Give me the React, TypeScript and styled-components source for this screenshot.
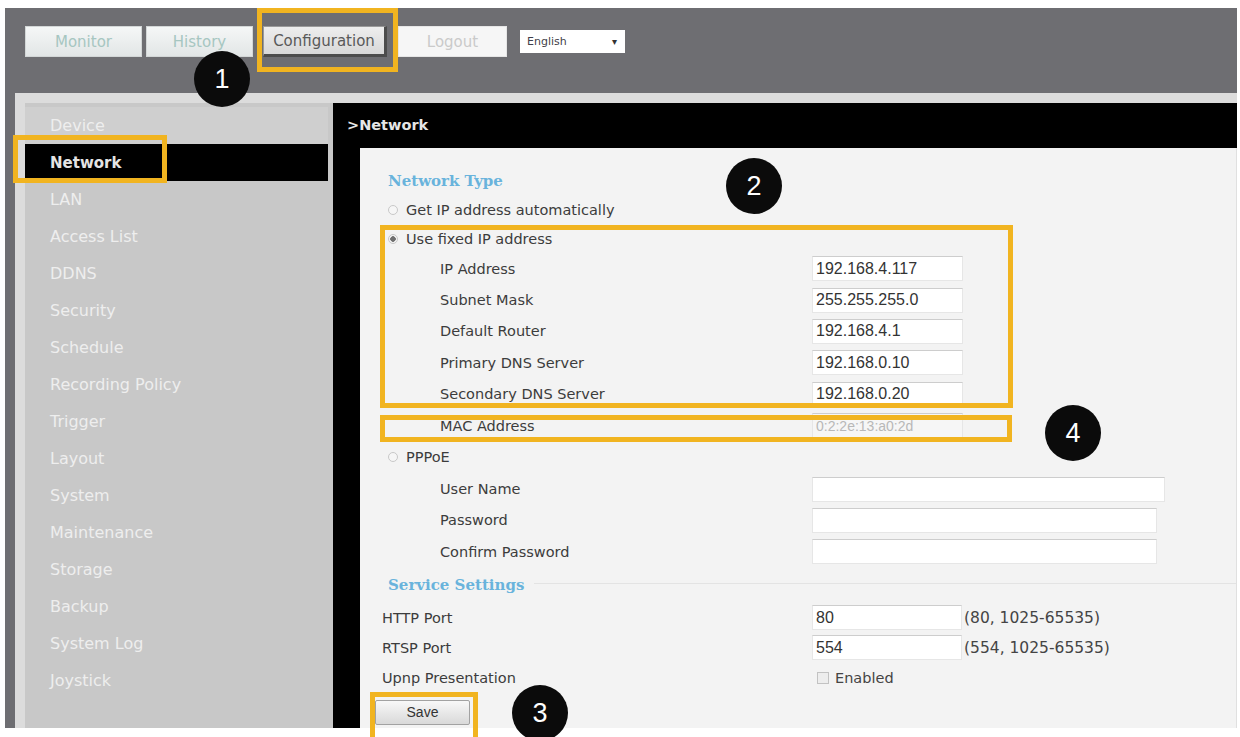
import React from "react";
import styled, { createGlobalStyle } from "styled-components";

const menuItems = [
  "Device",
  "Network",
  "LAN",
  "Access List",
  "DDNS",
  "Security",
  "Schedule",
  "Recording Policy",
  "Trigger",
  "Layout",
  "System",
  "Maintenance",
  "Storage",
  "Backup",
  "System Log",
  "Joystick",
];

const fixedIpFields = [
  { label: "IP Address", value: "192.168.4.117" },
  { label: "Subnet Mask", value: "255.255.255.0" },
  { label: "Default Router", value: "192.168.4.1" },
  { label: "Primary DNS Server", value: "192.168.0.10" },
  { label: "Secondary DNS Server", value: "192.168.0.20" },
];

const pppoeFields = [
  { label: "User Name", width: 353 },
  { label: "Password", width: 345 },
  { label: "Confirm Password", width: 345 },
];

const ports = [
  { label: "HTTP Port", value: "80", hint: "(80, 1025-65535)" },
  { label: "RTSP Port", value: "554", hint: "(554, 1025-65535)" },
];

const App = () => {
  return (
    <>
      <GlobalStyle />
      <Page>
        <Frame>
          <TopBar>
            <NavButton $w={117} $mr={4} $variant="dim">
              Monitor
            </NavButton>
            <NavButton $w={107} $mr={10} $variant="dim">
              History
            </NavButton>
            <NavButton $w={124} $mr={11} $variant="active">
              Configuration
            </NavButton>
            <NavButton $w={109} $mr={13} $variant="light">
              Logout
            </NavButton>
            <LangSelect>
              <span>English</span>
              <LangArrow>▾</LangArrow>
            </LangSelect>
          </TopBar>

          <Body>
            <Sidebar>
              {menuItems.map((item) => (
                <MenuItem
                  key={item}
                  $active={item === "Network"}
                  $top={item === "Device"}
                >
                  {item}
                </MenuItem>
              ))}
            </Sidebar>

            <Content>
              <ContentHeader>&gt;Network</ContentHeader>
              <ContentBody>
                <Panel>
                  <SectionTitle $h={28}>Network Type</SectionTitle>
                  <RadioRow>
                    <Radio />
                    Get IP address automatically
                  </RadioRow>
                  <RadioRow>
                    <Radio $checked />
                    Use fixed IP address
                  </RadioRow>
                  {fixedIpFields.map((f) => (
                    <FieldRow key={f.label} $indent={80} $h={31.4}>
                      <FieldLabel $indent={80}>{f.label}</FieldLabel>
                      <TextInput $w={151} readOnly value={f.value} />
                    </FieldRow>
                  ))}
                  <FieldRow $indent={80} $h={31.4}>
                    <FieldLabel $indent={80}>MAC Address</FieldLabel>
                    <TextInput $w={151} $muted readOnly value="0:2:2e:13:a0:2d" />
                  </FieldRow>
                  <RadioRow $h={32}>
                    <Radio />
                    PPPoE
                  </RadioRow>
                  {pppoeFields.map((f) => (
                    <FieldRow key={f.label} $indent={80} $h={31.4}>
                      <FieldLabel $indent={80}>{f.label}</FieldLabel>
                      <TextInput $w={f.width} readOnly value="" />
                    </FieldRow>
                  ))}

                  <SectionTitle $h={35} $rule>
                    Service Settings
                  </SectionTitle>
                  {ports.map((p) => (
                    <FieldRow key={p.label} $indent={22} $h={30}>
                      <FieldLabel $indent={22}>{p.label}</FieldLabel>
                      <TextInput $w={150} readOnly value={p.value} />
                      <Hint>{p.hint}</Hint>
                    </FieldRow>
                  ))}
                  <FieldRow $indent={22} $h={30}>
                    <FieldLabel $indent={22}>Upnp Presentation</FieldLabel>
                    <CheckBox />
                    <CheckText>Enabled</CheckText>
                  </FieldRow>
                  <SaveRow>
                    <SaveButton>Save</SaveButton>
                  </SaveRow>
                </Panel>
              </ContentBody>
            </Content>
          </Body>
        </Frame>

        {/* annotation overlays */}
        <HighlightBox $x={257} $y={8} $w={141} $h={64} />
        <HighlightBox $x={13} $y={135} $w={154} $h={48} />
        <HighlightBox $x={380} $y={225} $w={633} $h={183} />
        <HighlightBox $x={380} $y={415} $w={632} $h={27} />
        <HighlightBox $x={370} $y={692} $w={108} $h={60} />

        <Callout $x={222} $y={79}>1</Callout>
        <Callout $x={754} $y={186}>2</Callout>
        <Callout $x={540} $y={713}>3</Callout>
        <Callout $x={1073} $y={433}>4</Callout>
      </Page>
    </>
  );
};

export default App;

const GlobalStyle = createGlobalStyle`
  html, body {
    margin: 0;
    padding: 0;
    background: #ffffff;
  }
  body {
    font-family: "DejaVu Sans", Verdana, sans-serif;
  }
`;

const Page = styled.div`
  position: relative;
  width: 1240px;
  height: 737px;
  overflow: hidden;
  box-sizing: border-box;
  padding: 8px 0 0 5px;
  background: #ffffff;
`;

const Frame = styled.div`
  width: 1232px;
  height: 720px;
  background: #6e6e72;
  display: flex;
  flex-direction: column;
`;

const TopBar = styled.div`
  height: 85px;
  flex: 0 0 auto;
  box-sizing: border-box;
  padding: 18px 0 0 20px;
  display: flex;
  align-items: flex-start;
`;

const NavButton = styled.div<{
  $w: number;
  $mr: number;
  $variant: "dim" | "active" | "light";
}>`
  width: ${({ $w }) => $w}px;
  height: 31px;
  margin-right: ${({ $mr }) => $mr}px;
  box-sizing: border-box;
  display: flex;
  align-items: center;
  justify-content: center;
  font-size: 15px;
  ${({ $variant }) =>
    $variant === "dim"
      ? `
    background: linear-gradient(#f5f7f7, #e2e6e6);
    border: 1px solid #d3d7d7;
    color: #a6c6c1;
  `
      : $variant === "active"
      ? `
    background: linear-gradient(#eeeeee, #d8d8d8);
    border: 1px solid #9a9a9a;
    border-right: 3px solid #4c4c4c;
    border-bottom: 3px solid #4c4c4c;
    color: #595959;
  `
      : `
    background: #f6f6f6;
    border: 1px solid #e6e6e6;
    color: #cacaca;
  `}
`;

const LangSelect = styled.div`
  margin-top: 4px;
  width: 105px;
  height: 23px;
  box-sizing: border-box;
  background: #ffffff;
  display: flex;
  align-items: center;
  justify-content: space-between;
  padding: 0 8px 0 7px;
  font-size: 11px;
  color: #3f3f4a;
`;

const LangArrow = styled.span`
  font-size: 10px;
  color: #333;
`;

const Body = styled.div`
  flex: 1 1 auto;
  margin-left: 10px;
  box-sizing: border-box;
  padding: 10px 0 0 10px;
  background: #dcdcdc;
  display: flex;
`;

const Sidebar = styled.div`
  width: 308px;
  flex: 0 0 auto;
  box-sizing: border-box;
  padding-top: 4px;
  background: #c8c8c8;
  display: flex;
  flex-direction: column;
`;

const MenuItem = styled.div<{ $active?: boolean; $top?: boolean }>`
  height: 37px;
  margin-right: 5px;
  box-sizing: border-box;
  padding-left: 25px;
  display: flex;
  align-items: center;
  font-size: ${({ $active }) => ($active ? "15px" : "16px")};
  font-weight: ${({ $active }) => ($active ? "bold" : "normal")};
  color: ${({ $active }) => ($active ? "#e4e4e4" : "#eeeeee")};
  background: ${({ $active, $top }) =>
    $active ? "#000000" : $top ? "#cfcfcf" : "transparent"};
`;

const Content = styled.div`
  flex: 1 1 auto;
  background: #000000;
  display: flex;
  flex-direction: column;
`;

const ContentHeader = styled.div`
  height: 45px;
  flex: 0 0 auto;
  line-height: 45px;
  padding-left: 14px;
  font-size: 14.5px;
  font-weight: bold;
  color: #e6e6e6;
`;

const ContentBody = styled.div`
  flex: 1 1 auto;
  display: flex;
  padding-left: 27px;
`;

const Panel = styled.div`
  flex: 1 1 auto;
  box-sizing: border-box;
  padding-top: 19px;
  background: #f3f3f3;
  border-right: 1px solid #e0e0e0;
  display: flex;
  flex-direction: column;
`;

const SectionTitle = styled.div<{ $h: number; $rule?: boolean }>`
  height: ${({ $h }) => $h}px;
  flex: 0 0 auto;
  padding-left: 28px;
  display: flex;
  align-items: center;
  font-family: "DejaVu Serif", Georgia, serif;
  font-size: 15px;
  font-weight: bold;
  color: #69b3dc;

  ${({ $rule }) =>
    $rule &&
    `
    &::after {
      content: "";
      flex: 1 1 auto;
      height: 1px;
      margin: -4px 0 0 10px;
      background: #e3e3e3;
    }
  `}
`;

const RadioRow = styled.div<{ $h?: number }>`
  height: ${({ $h }) => $h ?? 29}px;
  flex: 0 0 auto;
  padding-left: 28px;
  display: flex;
  align-items: center;
  font-size: 14.5px;
  color: #3c3c3c;
`;

const Radio = styled.span<{ $checked?: boolean }>`
  width: 10px;
  height: 10px;
  margin-right: 8px;
  box-sizing: border-box;
  border-radius: 50%;
  border: 1px solid #c8c8c8;
  background: ${({ $checked }) =>
    $checked
      ? "radial-gradient(circle, #6f6f6f 0 2.5px, #f4f4f4 3px)"
      : "#f6f6f6"};
`;

const FieldRow = styled.div<{ $indent: number; $h: number }>`
  height: ${({ $h }) => $h}px;
  flex: 0 0 auto;
  padding-left: ${({ $indent }) => $indent}px;
  display: flex;
  align-items: center;
`;

const FieldLabel = styled.div<{ $indent: number }>`
  width: ${({ $indent }) => 452 - $indent}px;
  flex: 0 0 auto;
  font-size: 14.5px;
  color: #3c3c3c;
`;

const TextInput = styled.input<{ $w: number; $muted?: boolean }>`
  width: ${({ $w }) => $w}px;
  height: 25px;
  box-sizing: border-box;
  margin: 0;
  padding: 0 3px;
  outline: none;
  border: 1px solid #e6e6e6;
  border-top-color: #cdcdcd;
  background: ${({ $muted }) => ($muted ? "#f6f6f6" : "#ffffff")};
  font-family: "Liberation Sans", Arial, sans-serif;
  font-size: ${({ $muted }) => ($muted ? "14px" : "16px")};
  color: ${({ $muted }) => ($muted ? "#b8b8b8" : "#333333")};
`;

const Hint = styled.span`
  margin-left: 2px;
  font-size: 15.5px;
  color: #444444;
`;

const CheckBox = styled.span`
  width: 12px;
  height: 12px;
  margin-left: 5px;
  box-sizing: border-box;
  border: 1px solid #c2c2c2;
  background: #ededed;
`;

const CheckText = styled.span`
  margin-left: 6px;
  font-size: 14.5px;
  color: #444444;
`;

const SaveRow = styled.div`
  padding: 7px 0 0 15px;
  display: flex;
`;

const SaveButton = styled.div`
  width: 95px;
  height: 25px;
  box-sizing: border-box;
  border: 1px solid #a2a2a2;
  border-radius: 2px;
  background: linear-gradient(#f8f8f8, #d9d9d9);
  display: flex;
  align-items: center;
  justify-content: center;
  font-family: "Liberation Sans", Arial, sans-serif;
  font-size: 14px;
  color: #333333;
`;

const HighlightBox = styled.div<{ $x: number; $y: number; $w: number; $h: number }>`
  position: absolute;
  left: ${({ $x }) => $x}px;
  top: ${({ $y }) => $y}px;
  width: ${({ $w }) => $w}px;
  height: ${({ $h }) => $h}px;
  box-sizing: border-box;
  border: 5px solid #f1b420;
  pointer-events: none;
`;

const Callout = styled.div<{ $x: number; $y: number }>`
  position: absolute;
  left: ${({ $x }) => $x - 28}px;
  top: ${({ $y }) => $y - 28}px;
  width: 56px;
  height: 56px;
  border-radius: 50%;
  background: #0b0b0b;
  color: #ffffff;
  display: flex;
  align-items: center;
  justify-content: center;
  font-family: "Liberation Sans", Arial, sans-serif;
  font-size: 27px;
`;
